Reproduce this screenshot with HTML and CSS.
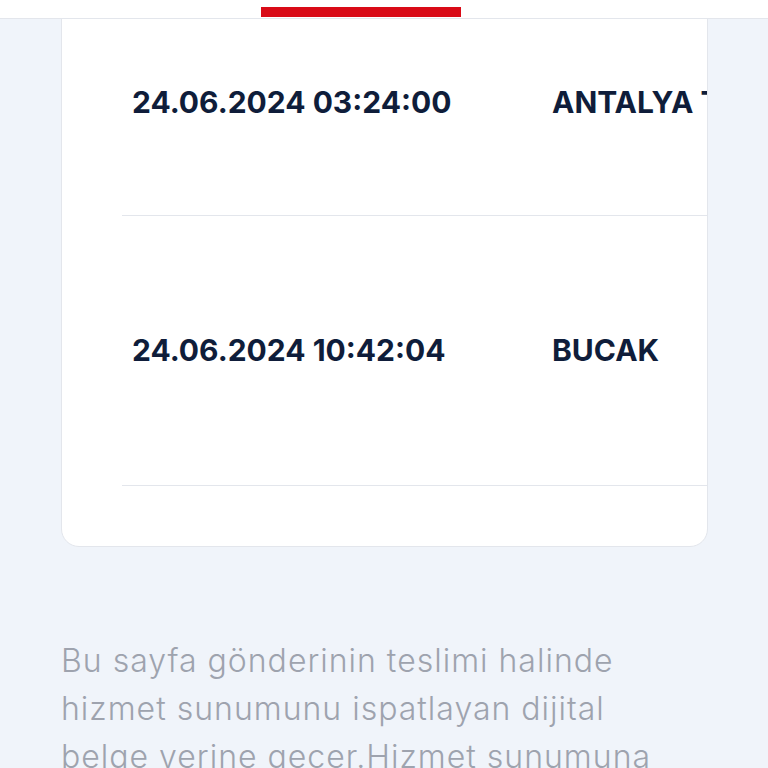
FILE: index.html
```html
<!DOCTYPE html>
<html lang="tr">
<head>
<meta charset="utf-8">
<title>Gönderi Takip</title>
<link rel="stylesheet" href="styles.css">
</head>
<body>
<header class="topbar">
  <div class="tab-indicator"></div>
</header>
<main class="page">
  <section class="card">
    <table class="moves">
      <tbody>
        <tr class="row row-first">
          <td class="cell cell-date">24.06.2024 03:24:00</td>
          <td class="cell cell-place">ANTALYA TRANSFER MERKEZİ</td>
        </tr>
        <tr class="row">
          <td class="cell cell-date">24.06.2024 10:42:04</td>
          <td class="cell cell-place">BUCAK</td>
        </tr>
      </tbody>
    </table>
  </section>
  <p class="note">Bu sayfa gönderinin teslimi halinde<br>hizmet sunumunu ispatlayan dijital<br>belge yerine geçer.Hizmet sunumuna<br>ilişkin tüm bilgiler bu sayfada yer alır.</p>
</main>
</body>
</html>
```
FILE: styles.css
```css
* { box-sizing: border-box; }
html, body {
  margin: 0;
  padding: 0;
  background: #f0f4fa;
  overflow: hidden;
  height: 768px;
}
body {
  font-family: "Inter", "Liberation Sans", sans-serif;
}
.topbar {
  position: fixed;
  top: 0;
  left: 0;
  right: 0;
  height: 19px;
  background: #ffffff;
  border-bottom: 1px solid #e3e6ec;
  z-index: 2;
}
.tab-indicator {
  position: absolute;
  left: 261px;
  top: 7px;
  width: 200px;
  height: 10px;
  background: #d90b17;
}
.page {
  padding: 0 61px;
}
.card {
  margin-top: -19px;
  background: #ffffff;
  border: 1px solid #e3e6ec;
  border-radius: 18px;
  padding: 7px 0 60px 60px;
  overflow: hidden;
  width: 647px;
}
.moves {
  border-collapse: collapse;
  width: 900px;
  table-layout: fixed;
}
.row {
  height: 270px;
  border-bottom: 1px solid #e3e6ec;
}
.row-first {
  height: 226px;
}
.cell {
  padding: 0 10px;
  vertical-align: middle;
  font-size: 30px;
  font-weight: 700;
  letter-spacing: 0;
  color: #0f1d3a;
  white-space: nowrap;
  overflow: hidden;
}
.cell-date { width: 420px; }
.cell-place { width: 480px; }
.note {
  margin: 90px 0 0 0;
  font-size: 32px;
  line-height: 48px;
  font-weight: 300;
  letter-spacing: 1px;
  color: #9ea3ae;
}
```
